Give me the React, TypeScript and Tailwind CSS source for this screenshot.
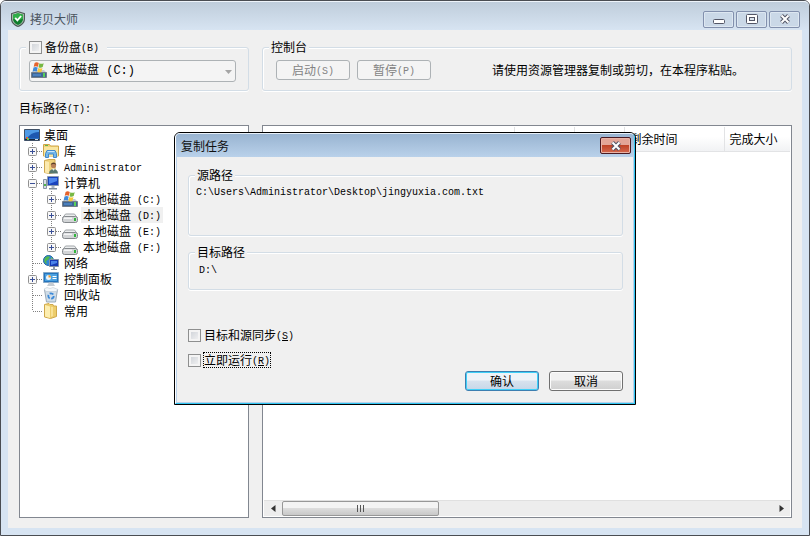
import React, { useState } from 'react'

type Cell = 'plus' | 'minus' | 'tee' | 'elbow' | 'line'

interface TreeItem {
  icon: React.ReactNode
  label: string
  drive?: string
  latin?: boolean
  cells: Cell[]
  last?: boolean
  selected?: boolean
}

// half-width characters take 6px beside the 12px full-width ones
const Latin = ({ children }: { children: React.ReactNode }) => (
  <span className="align-[1px] font-['Liberation_Mono',monospace] text-[10px] leading-none whitespace-pre">
    {children}
  </span>
)

const ShieldIcon = () => (
  <svg width="16" height="16" viewBox="0 0 16 16">
    <path d="M8 0 15 2.200V8c0 3.800-2.700 6.500-7 8C3.700 14.500 1 11.800 1 8V2.200Z" fill="#4d5a55" />
    <path d="M8 1.300 13.800 3.100V8c0 3.200-2.200 5.400-5.800 6.800C4.400 13.400 2.200 11.200 2.200 8V3.100Z" fill="#b9cbbf" />
    <path d="M8 2.200 13 3.700V8c0 2.800-2 4.700-5 6-3-1.300-5-3.200-5-6V3.700Z" fill="#0f7d2c" />
    <path d="M8 2.200 13 3.700V8L8 9 3 8V3.700Z" fill="#2fae48" />
    <path d="m5.200 6.800 2.200 2.500 3.700-4.300" fill="none" stroke="#fff" strokeWidth="1.800" />
  </svg>
)

const DesktopIcon = () => (
  <svg width="16" height="16" viewBox="0 0 16 16">
    <path d="M.5 2.500h15v11H.5z" fill="#2a6fc4" stroke="#3f5066" />
    <path d="M1 3h14v5L1 11z" fill="#4f9ae6" />
    <path d="M5 9c3-3 6-4 10-4v6H3z" fill="#1d57b0" />
    <path d="M1 12h14v1H1z" fill="#17233a" />
    <path d="M2 10h2v2H2z" fill="#e85d2c" />
    <path d="M3 11h2v2H3z" fill="#6fc04a" />
    <path d="M11 12h3v1h-3z" fill="#c7d6e6" />
  </svg>
)

const LibraryIcon = () => (
  <svg width="16" height="16" viewBox="0 0 16 16">
    <path d="M.5 1.500h6l1 1.500h8v10H.5z" fill="#f3d479" stroke="#cfa548" />
    <path d="M1 4h14v9H1z" fill="#f9e6a0" />
    <path d="M2 2h3v1H2z" fill="#5fb44e" />
    <path d="M2.500 14.500v-4l1.500-3h8l1.500 3v4h-3V11h-5v3.500z" fill="#74b7ea" stroke="#4389c9" />
    <path d="M4.500 8.500h7" stroke="#c9e7fb" />
  </svg>
)

const UserIcon = () => (
  <svg width="16" height="16" viewBox="0 0 16 16">
    <path d="M1.500 1.500 6 .5h6v13l-6 1-4.500-1z" fill="#f0d37c" stroke="#cfa850" />
    <path d="M2 2 6 3v11.500L2 13.500z" fill="#fbeab0" />
    <circle cx="10.500" cy="6.500" r="2.600" fill="#b88058" />
    <path d="M7.800 6c0-3.500 5.400-3.500 5.400 0-1-1-4-1.500-5.400 0z" fill="#5b3f2a" />
    <path d="M6 14.500c0-6 9-6 9 0z" fill="#56786f" />
    <path d="m9 9.800 1.500 2 1.500-2z" fill="#e7eef3" />
  </svg>
)

const ComputerIcon = () => (
  <svg width="16" height="16" viewBox="0 0 16 16">
    <path d="M.5 4.500h3v9h-3z" fill="#d6dde4" stroke="#8794a3" />
    <path d="M1 9h2v2H1z" fill="#4fb54a" />
    <path d="M4.500 1.500h11v9h-11z" fill="#1943bd" stroke="#8b9bb0" />
    <path d="M6 3h8v3L6 9z" fill="#4c86ee" />
    <path d="M8.500 11h3v2h-3z" fill="#a8b4c0" />
    <path d="M6 13h8v1.500H6z" fill="#7e8d9d" />
  </svg>
)

const SystemDriveIcon = () => (
  <svg width="16" height="16" viewBox="0 0 16 16">
    <path d="m1 10 2-2h10l2 2z" fill="#c4cbd3" />
    <path d="M.5 10.500h15v5H.5z" fill="#3f6694" stroke="#737e8b" />
    <path d="M2 12h8v2H2z" fill="#4b80bd" />
    <path d="M12 11h2v4h-2z" fill="#59cf58" />
    <path d="M3.600.900C5.100 0 6.400.200 7.800 1L6.900 4.800c-1.400-.8-2.700-.8-4.200 0z" fill="#e5632c" />
    <path d="M8.400 1.300c1.500.8 2.800.7 4.300-.1l-1 3.900c-1.400.8-2.800.9-4.200.1z" fill="#77b843" />
    <path d="M2.500 5.500c1.400-.8 2.800-.8 4.200.1L5.800 9.500c-1.400-.8-2.800-.8-4.200 0z" fill="#3f89d8" />
    <path d="M7.300 6c1.500.8 2.800.7 4.200-.1l-1 3.900c-1.400.8-2.700.7-4.100 0z" fill="#f6c83a" />
  </svg>
)

const DriveIcon = () => (
  <svg width="16" height="16" viewBox="0 0 16 16">
    <path d="M1 10.500 3.500 7h9l2.500 3.500z" fill="#eceeef" stroke="#a1a5a9" />
    <rect x=".5" y="9.500" width="15" height="6" rx="2" fill="#d2d4d6" stroke="#85898d" />
    <path d="M2 10.500h8V12H2z" fill="#f4f5f6" />
    <path d="M12 11h2v3h-2z" fill="#32b53d" />
  </svg>
)

const NetworkIcon = () => (
  <svg width="16" height="16" viewBox="0 0 16 16">
    <circle cx="5.500" cy="5.500" r="5" fill="#2f86d8" stroke="#2364a3" />
    <path d="M2 3c2-2.500 4-2 5-1L5 5 3 6l1 3C1 8 .8 5 2 3z" fill="#54b84c" />
    <path d="m8 2 2 2-2 3z" fill="#74ca59" />
    <path d="M6.500 4.500h9v7h-9z" fill="#163bb4" stroke="#8493a8" />
    <path d="M8 6h6v2l-6 2z" fill="#4a84ea" />
    <path d="M10 12h2v2h-2zM8 14h6v1H8z" fill="#8e9baa" />
  </svg>
)

const ControlPanelIcon = () => (
  <svg width="16" height="16" viewBox="0 0 16 16">
    <path d="M.5 1.500h15v10H.5z" fill="#2474bd" stroke="#84a9c9" />
    <path d="M2 3h12v7H2z" fill="#4ba1e0" />
    <circle cx="5.500" cy="6.500" r="2.500" fill="#eaf5fc" />
    <path d="M5.500 4v2.500H8C8 5 7 4 5.500 4z" fill="#f19a2b" />
    <path d="M9.500 5.500h4M9.500 7.500h4" stroke="#fff" />
    <path d="M6 11.500h4l2 3.500H4z" fill="#c5ccd3" />
  </svg>
)

const RecycleIcon = () => (
  <svg width="16" height="16" viewBox="0 0 16 16">
    <path d="M1.500 2.500h13l-2 12.500h-9z" fill="#d0dde8" stroke="#9baab7" />
    <path d="M1 2 4 .5l3 1 3-1 5 2-2 2H3z" fill="#f3f7fa" stroke="#b5c1cb" strokeWidth=".5" />
    <circle cx="8" cy="9" r="2.700" fill="none" stroke="#3c8ad8" strokeWidth="1.800" strokeDasharray="4 1.500" />
  </svg>
)

const FolderIcon = () => (
  <svg width="16" height="16" viewBox="0 0 16 16">
    <path d="M1.500 1.500 6 .5l1 1h3l.5 1.500h3v10.500l-6 2-6-1.500z" fill="#edcd6b" stroke="#cfa84b" />
    <path d="M2 2 7 3.500V15l-5-1.500z" fill="#fdeeb0" />
    <path d="M8 4h2v9l-2 1z" fill="#f9e296" />
  </svg>
)

const TreeCell = ({ type, last }: { type: Cell; last?: boolean }) => {
  const box = type === 'plus' || type === 'minus'
  return (
    <svg width="19" height="16" viewBox="0 0 19 16" className="shrink-0">
      <path d={last ? 'M9.500 0V8' : 'M9.500 0V16'} stroke="#808080" strokeDasharray="1 1" />
      {type !== 'line' && <path d="M10 8.500H19" stroke="#808080" strokeDasharray="1 1" />}
      {box && (
        <>
          <rect x="5.500" y="4.500" width="8" height="8" rx="1" fill="#f8f8f8" stroke="#919191" />
          <path d={type === 'plus' ? 'M7 8.500H12M9.500 6V11' : 'M7 8.500H12'} stroke="#3a4f96" />
        </>
      )}
    </svg>
  )
}

const treeItems: TreeItem[] = [
  { icon: <DesktopIcon />, label: '桌面', cells: [] },
  { icon: <LibraryIcon />, label: '库', cells: ['plus'] },
  { icon: <UserIcon />, label: 'Administrator', latin: true, cells: ['plus'] },
  { icon: <ComputerIcon />, label: '计算机', cells: ['minus'] },
  { icon: <SystemDriveIcon />, label: '本地磁盘', drive: ' (C:)', cells: ['line', 'plus'] },
  { icon: <DriveIcon />, label: '本地磁盘', drive: ' (D:)', cells: ['line', 'plus'], selected: true },
  { icon: <DriveIcon />, label: '本地磁盘', drive: ' (E:)', cells: ['line', 'plus'] },
  { icon: <DriveIcon />, label: '本地磁盘', drive: ' (F:)', cells: ['line', 'plus'], last: true },
  { icon: <NetworkIcon />, label: '网络', cells: ['tee'] },
  { icon: <ControlPanelIcon />, label: '控制面板', cells: ['plus'] },
  { icon: <RecycleIcon />, label: '回收站', cells: ['tee'] },
  { icon: <FolderIcon />, label: '常用', cells: ['elbow'], last: true },
]

const GroupBox = ({
  legend,
  className = '',
  children,
}: {
  legend: React.ReactNode
  className?: string
  children: React.ReactNode
}) => (
  <fieldset
    className={`min-w-0 rounded-[3px] border border-[#d3dde6] shadow-[0_1px_0_#fff,inset_1px_1px_0_#fff] ${className}`}
  >
    <legend className="ml-1.5 flex h-4 items-center bg-[#f0f0f0] px-0.5">{legend}</legend>
    {children}
  </fieldset>
)

const CheckBox = (props: React.InputHTMLAttributes<HTMLInputElement>) => (
  <input
    type="checkbox"
    className="size-[13px] shrink-0 appearance-none border border-[#8e8f8f] bg-linear-to-br from-[#cbcfd5] to-[#f6f6f6] shadow-[inset_0_0_0_2px_#f4f4f4] checked:bg-[#4b6ea8]"
    {...props}
  />
)

const CloseGlyph = () => (
  <svg width="12" height="10" viewBox="0 0 12 10">
    <path d="m2.500 1.500 7 7m0-7-7 7" stroke="#535666" strokeWidth="4" />
    <path d="m2.500 1.500 7 7m0-7-7 7" stroke="#fff" strokeWidth="2" />
  </svg>
)

const MinimizeGlyph = () => (
  <svg width="12" height="10" viewBox="0 0 12 10">
    <rect x=".5" y="5.500" width="11" height="4" rx="1" fill="#fff" stroke="#535666" />
  </svg>
)

const MaximizeGlyph = () => (
  <svg width="12" height="10" viewBox="0 0 12 10">
    <rect x=".5" y=".5" width="11" height="9" rx="1" fill="#fff" stroke="#535666" />
    <rect x="3.500" y="3.500" width="5" height="3" fill="#dbe4ee" stroke="#535666" />
  </svg>
)

const captionButtons = [
  { label: '最小化', glyph: <MinimizeGlyph /> },
  { label: '最大化', glyph: <MaximizeGlyph /> },
  { label: '关闭', glyph: <CloseGlyph /> },
]

const TargetTree = () => (
  <ul className="min-h-0 overflow-hidden border border-[#828790] bg-white pt-px pl-[3px]">
    {treeItems.map((item, i) => (
      <li key={i} className="flex h-4 items-center">
        {item.cells.map((cell, j) => (
          <TreeCell key={j} type={cell} last={item.last && j === item.cells.length - 1} />
        ))}
        <span className="ml-px shrink-0">{item.icon}</span>
        <span
          className={`h-4 px-0.5 whitespace-pre ${item.cells.length ? 'ml-[3px]' : 'ml-0.5'} ${item.selected ? 'bg-[#f0f0f0]' : ''}`}
        >
          {item.latin ? <Latin>{item.label}</Latin> : item.label}
          {item.drive && <Latin>{item.drive}</Latin>}
        </span>
      </li>
    ))}
  </ul>
)

const TaskList = () => (
  <div className="flex min-h-0 min-w-0 flex-col border border-[#828790] bg-white p-px">
    <table className="w-full table-fixed">
      <thead>
        <tr className="h-6 bg-linear-to-b from-white from-40% to-[#f1f2f4]">
          <td className="w-[250px] border-r border-b border-[#e2e3e5]" />
          <td className="w-[60px] border-r border-b border-[#e2e3e5]" />
          <td className="w-[50px] border-r border-b border-[#e2e3e5]" />
          <th className="w-[100px] border-r border-b border-[#e2e3e5] px-[5px] text-left font-normal">
            剩余时间
          </th>
          <th className="border-b border-[#e2e3e5] px-[5px] text-left font-normal whitespace-nowrap">
            完成大小
          </th>
        </tr>
      </thead>
    </table>
    <div className="mt-auto flex h-4 items-center border-t border-[#e0e0e0] bg-[#ededed]">
      <button type="button" aria-label="向左滚动" className="flex h-full w-[18px] items-center justify-center">
        <svg width="5" height="7" viewBox="0 0 5 7">
          <path d="M4.500 0v7L0 3.500z" fill="#333" />
        </svg>
      </button>
      <div className="flex h-full flex-1">
        <div className="flex h-full w-[157px] items-center justify-center gap-0.5 rounded-xs border border-[#979797] bg-linear-to-b from-[#f3f3f3] from-45% via-[#dcdcdc] via-50% to-[#c8c8c8]">
          <i className="h-[7px] w-px bg-[#555]" />
          <i className="h-[7px] w-px bg-[#555]" />
          <i className="h-[7px] w-px bg-[#555]" />
        </div>
      </div>
      <button type="button" aria-label="向右滚动" className="flex h-full w-[18px] items-center justify-center">
        <svg width="5" height="7" viewBox="0 0 5 7">
          <path d="M.5 0v7L5 3.500z" fill="#333" />
        </svg>
      </button>
    </div>
  </div>
)

const CopyDialog = ({ onClose }: { onClose: () => void }) => {
  const [sync, setSync] = useState(false)
  const [runNow, setRunNow] = useState(false)

  return (
    <div
      role="dialog"
      aria-labelledby="dialog-title"
      className="absolute top-[131px] left-[173px] w-[462px] rounded-t-[6px] border border-black bg-[#b9d1ea]"
    >
      <div className="rounded-t-[5px] border border-t-[#e6eff8] border-r-[#2fc6f2] border-b-[#2fc6f2] border-l-white px-px pb-px">
        <div className="-mx-px flex h-[23px] items-center justify-between rounded-t-[4px] bg-linear-to-b from-[#99b4d1] to-[#b9d1ea] pr-[3px] pl-[5px]">
          <h2 id="dialog-title" className="text-[#111]">
            复制任务
          </h2>
          <button
            type="button"
            aria-label="关闭对话框"
            onClick={onClose}
            className="flex h-[17px] w-[31px] items-center justify-center rounded-xs border border-[#4a1a22] bg-linear-to-b from-[#e3a597] from-45% via-[#bf4327] via-50% to-[#d4694f] shadow-[inset_0_0_0_1px_#e9b3a6]"
          >
            <CloseGlyph />
          </button>
        </div>
        <div className="bg-[#f0f0f0] pt-2.5 pr-2.5 pb-[11px] pl-[11px]">
          <GroupBox legend="源路径" className="min-h-[69px]">
            <p className="pl-[7px]">
              <Latin>{'C:\\Users\\Administrator\\Desktop\\jingyuxia.com.txt'}</Latin>
            </p>
          </GroupBox>
          <GroupBox legend="目标路径" className="mt-2 min-h-[46px]">
            <p className="pt-px pl-2.5">
              <Latin>{'D:\\'}</Latin>
            </p>
          </GroupBox>
          <div className="mt-[37px] flex flex-col items-start gap-[9px]">
            <label className="flex h-4 items-center gap-0.5">
              <CheckBox checked={sync} onChange={(e) => setSync(e.target.checked)} />
              <span className="px-px">
                目标和源同步
                <Latin>
                  (<u>S</u>)
                </Latin>
              </span>
            </label>
            <label className="flex h-4 items-center gap-0.5">
              <CheckBox checked={runNow} onChange={(e) => setRunNow(e.target.checked)} />
              <span className="border border-dotted border-black leading-[13px]">
                立即运行
                <Latin>
                  (<u>R</u>)
                </Latin>
              </span>
            </label>
          </div>
          <div className="mt-[3px] flex justify-end gap-2.5">
            <button
              type="button"
              onClick={onClose}
              className="flex h-5 w-[74px] items-center justify-center rounded-[3px] border border-[#3c7fb1] bg-linear-to-b from-[#eef3f8] from-45% via-[#d7e2ee] via-50% to-[#c6d7e8] shadow-[inset_0_0_0_1px_#3fd0f8]"
            >
              确认
            </button>
            <button
              type="button"
              onClick={onClose}
              className="flex h-5 w-[74px] items-center justify-center rounded-[3px] border border-[#707070] bg-linear-to-b from-[#f2f2f2] from-45% via-[#dddddd] via-50% to-[#cfcfcf] shadow-[inset_0_0_0_1px_#fcfcfc]"
            >
              取消
            </button>
          </div>
        </div>
      </div>
    </div>
  )
}

const App: React.FC = () => {
  const [open, setOpen] = useState(true)
  const [backup, setBackup] = useState(false)

  return (
    <div className="relative flex h-screen flex-col rounded-t-[6px] border border-[#4a4d52] bg-[#d7e4f2] font-['Noto_Sans_CJK_SC',sans-serif] text-[12px] leading-4 text-black">
      <header className="flex h-[29px] shrink-0 items-center justify-between rounded-t-[5px] border-t border-[#eef4fa] bg-linear-to-b from-[#bfcddb] to-[#d7e4f2] pt-1.5 pr-[9px] pl-[9px]">
        <div className="flex items-center gap-1">
          <ShieldIcon />
          <h1 className="text-[#4a545e]">拷贝大师</h1>
        </div>
        <div className="flex gap-0.5">
          {captionButtons.map((b) => (
            <button
              key={b.label}
              type="button"
              aria-label={b.label}
              className="flex h-[17px] w-[31px] items-center justify-center rounded-xs border border-[#8290ad] bg-[#cad8e7] shadow-[inset_0_0_0_1px_#dde7f1]"
            >
              {b.glyph}
            </button>
          ))}
        </div>
      </header>

      <main className="mx-[7px] mb-[7px] grid min-h-0 flex-1 grid-cols-[230px_1fr] grid-rows-[auto_auto_1fr] gap-x-[13px] bg-[#f0f0f0] pt-[9px] pr-2.5 pb-2.5 pl-[11px]">
        <GroupBox
          legend={
            <label className="ml-px flex items-center gap-[3px] pr-1.5">
              <CheckBox checked={backup} onChange={(e) => setBackup(e.target.checked)} />
              <span>
                备份盘<Latin>(B)</Latin>
              </span>
            </label>
          }
        >
          <div className="relative mt-[5px] mr-3 mb-2 ml-[9px]">
            <select
              aria-label="备份盘"
              disabled
              className="block h-[22px] w-full appearance-none rounded-[3px] border border-[#adb2b5] bg-[#f4f4f4] pl-[21px] font-['Liberation_Mono','Noto_Sans_CJK_SC',monospace] text-[12px] text-black opacity-100"
            >
              <option>本地磁盘 (C:)</option>
            </select>
            <span className="pointer-events-none absolute top-0.5 left-0.5">
              <SystemDriveIcon />
            </span>
            <svg
              width="7"
              height="4"
              viewBox="0 0 7 4"
              className="pointer-events-none absolute top-[10px] right-1"
            >
              <path d="M0 0h7L3.500 4z" fill="#a5a5a5" />
            </svg>
          </div>
        </GroupBox>

        <GroupBox legend="控制台">
          <div className="mt-[5px] ml-[13px] flex items-center">
            <button
              type="button"
              disabled
              className="h-5 w-[74px] shrink-0 rounded-[3px] border border-[#adb2b5] bg-[#f4f4f4] text-[#838383]"
            >
              启动<Latin>(S)</Latin>
            </button>
            <button
              type="button"
              disabled
              className="ml-[7px] h-5 w-[74px] shrink-0 rounded-[3px] border border-[#adb2b5] bg-[#f4f4f4] text-[#838383]"
            >
              暂停<Latin>(P)</Latin>
            </button>
            <p className="ml-[61px] whitespace-nowrap">请使用资源管理器复制或剪切，在本程序粘贴。</p>
          </div>
        </GroupBox>

        <p className="col-span-2 my-[9px]">
          目标路径<Latin>(T):</Latin>
        </p>

        <TargetTree />
        <TaskList />
      </main>

      {open && <CopyDialog onClose={() => setOpen(false)} />}
    </div>
  )
}

export default App
